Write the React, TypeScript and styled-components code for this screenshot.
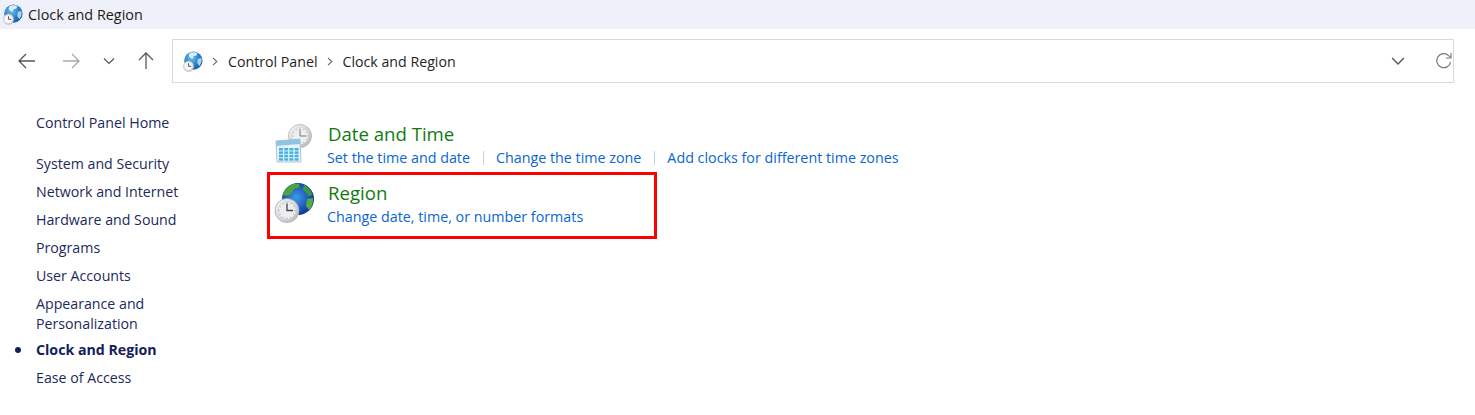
import React from 'react';
import styled, { createGlobalStyle } from 'styled-components';

const Global = createGlobalStyle`
  html, body { margin: 0; padding: 0; background: #fff; }
  body { font-family: "Open Sans", "Noto Sans", "Liberation Sans", sans-serif; overflow: hidden; }
`;

const Window = styled.div`
  width: 1475px;
  height: 415px;
  overflow: hidden;
  display: flex;
  flex-direction: column;
  background: #fff;
`;

const TitleBar = styled.div`
  height: 29px;
  flex: none;
  display: flex;
  align-items: center;
  gap: 5px;
  padding-left: 2px;
  background: #eef1f9;
  color: #1a1a1a;
  font-size: 14.4px;
`;

const NavRow = styled.div`
  height: 44px;
  flex: none;
  margin-top: 10px;
  display: flex;
  align-items: center;
  padding: 0 21px 0 0;
`;

const NavButtons = styled.div`
  width: 172px;
  flex: none;
  display: flex;
  align-items: center;
  padding-left: 17px;
  box-sizing: border-box;
`;

const NavButton = styled.div<{ $w: number }>`
  width: ${(p) => p.$w}px;
  display: flex;
  align-items: center;
  justify-content: flex-start;
  flex: none;
`;

const AddressBar = styled.div`
  flex: 1;
  height: 44px;
  box-sizing: border-box;
  border: 1px solid #d9d9d9;
  display: flex;
  align-items: center;
  padding: 0 0 0 9px;
  font-size: 14.2px;
  color: #1f1f1f;
`;

const Crumb = styled.span`
  white-space: nowrap;
`;

const Sep = styled.span`
  display: flex;
  align-items: center;
  margin: 0 10px 0 9px;
`;

const AddressEnd = styled.div`
  margin-left: auto;
  display: flex;
  align-items: center;
  gap: 30px;
`;

const Body = styled.div`
  flex: 1;
  display: flex;
`;

const Sidebar = styled.nav`
  width: 267px;
  flex: none;
  box-sizing: border-box;
  padding: 29px 0 0 36px;
  font-size: 14.2px;
  color: #1b2a5c;
`;

const SideHome = styled.div`
  line-height: 22px;
  margin-bottom: 16px;
`;

const SideItem = styled.div<{ $active?: boolean; $tight?: boolean }>`
  position: relative;
  line-height: 20px;
  padding: 4px 0 ${(p) => (p.$tight ? '2px' : '4px')};
  width: 160px;
  font-weight: ${(p) => (p.$active ? 700 : 400)};
  color: ${(p) => (p.$active ? '#14205a' : '#1b2a5c')};

  ${(p) =>
    p.$active &&
    `&::before {
      content: '';
      position: absolute;
      left: -21px;
      top: 11px;
      width: 6px;
      height: 6px;
      border-radius: 50%;
      background: #14205a;
    }`}
`;

const Main = styled.main`
  flex: 1;
  padding-top: 34px;
  display: flex;
  flex-direction: column;
`;

const Category = styled.section<{ $outlined?: boolean }>`
  display: flex;
  box-sizing: border-box;
  width: ${(p) => (p.$outlined ? '390px' : 'auto')};
  height: ${(p) => (p.$outlined ? '67px' : '52px')};
  border: 3px solid ${(p) => (p.$outlined ? '#ff0000' : 'transparent')};
  padding-left: 4px;
  margin-top: ${(p) => (p.$outlined ? '3px' : '0')};
  align-items: flex-start;
  padding-top: ${(p) => (p.$outlined ? '4px' : '0')};
`;

const CatIcon = styled.div`
  width: 53px;
  height: 48px;
  flex: none;
  display: flex;
  align-items: center;
`;

const CatText = styled.div`
  display: flex;
  flex-direction: column;
`;

const CatTitle = styled.div`
  font-size: 18.6px;
  line-height: 27px;
  color: #0f7b0f;
  margin-left: 1px;
`;

const Links = styled.div`
  display: flex;
  align-items: center;
  font-size: 14.3px;
  line-height: 21px;
  color: #0a66d0;
`;

const TaskLink = styled.span<{ $divided?: boolean }>`
  white-space: nowrap;
  ${(p) =>
    p.$divided &&
    `margin-left: 13px;
     padding-left: 12px;
     border-left: 1px solid #c9d3e0;
     line-height: 14px;`}
`;

const Arrow = ({ flip, color }: { flip?: boolean; color: string }) => (
  <svg width="20" height="20" viewBox="0 0 20 20" fill="none" stroke={color} strokeWidth="1.3">
    <path d={flip ? 'M2 10H18M11 3l7 7-7 7' : 'M18 10H2M9 3l-7 7 7 7'} />
  </svg>
);

const Up = () => (
  <svg width="20" height="20" viewBox="0 0 20 20" fill="none" stroke="#5a5a5a" strokeWidth="1.3">
    <path d="M10 18V2M3 9l7-7 7 7" />
  </svg>
);

const Chevron = ({ size = 12 }: { size?: number }) => (
  <svg width={size} height={size} viewBox="0 0 12 12" fill="none" stroke="#555" strokeWidth="1.2">
    <path d="M1 3.5l5 5 5-5" />
  </svg>
);

const SepChevron = () => (
  <svg width="6" height="9" viewBox="0 0 6 9" fill="none" stroke="#666" strokeWidth="1.1">
    <path d="M1 .8l3.8 3.700L1 8.200" />
  </svg>
);

const Refresh = () => (
  <svg width="18" height="18" viewBox="0 0 18 18" fill="none" stroke="#7a7a7a" strokeWidth="1.2">
    <path d="M15.600 10.200a7 7 0 1 1-2-6.600L15.800 5.600" />
    <path d="M16 1v5h-5" />
  </svg>
);

const Ticks = ({ cx, cy, r }: { cx: number; cy: number; r: number }) => (
  <g stroke="#9a9ea3" strokeWidth=".7">
    {Array.from({ length: 12 }).map((_, i) => {
      const a = (i * Math.PI) / 6;
      return (
        <line
          key={i}
          x1={cx + Math.cos(a) * r}
          y1={cy + Math.sin(a) * r}
          x2={cx + Math.cos(a) * (r - 1.5)}
          y2={cy + Math.sin(a) * (r - 1.5)}
        />
      );
    })}
  </g>
);

// small globe with a clock, used by the title bar and the address bar
const GlobeClock = ({ size, id }: { size: number; id: string }) => (
  <svg width={size} height={size} viewBox="0 0 48 48">
    <defs>
      <radialGradient id={`sea-${id}`} cx="0.4" cy="0.35" r="0.75">
        <stop offset="0" stopColor="#6fc3ee" />
        <stop offset="0.6" stopColor="#2678c4" />
        <stop offset="1" stopColor="#154f97" />
      </radialGradient>
      <linearGradient id={`face-${id}`} x1="0" y1="0" x2="1" y2="1">
        <stop offset="0" stopColor="#f6f6f6" />
        <stop offset="1" stopColor="#c5c5c5" />
      </linearGradient>
    </defs>
    <circle cx="26" cy="22" r="21" fill={`url(#sea-${id})`} />
    <path d="M18 4c5-2 13-2 17 1l-2 5-7 2-1 5-6-1-4-5z" fill="#d7edf9" />
    <path d="M36 18l8-2c2 6 0 13-4 18l-5-6z" fill="#a9d6ee" />
    <circle cx="15" cy="35" r="12" fill={`url(#face-${id})`} stroke="#a8a8a8" strokeWidth="1" />
    <circle cx="15" cy="35" r="8.500" fill="#f7f7f7" />
    <path d="M15 28v7h6" fill="none" stroke="#444" strokeWidth="2" />
  </svg>
);

const RegionGlyph = () => (
  <svg width="41" height="42" viewBox="0 0 41 42">
    <defs>
      <radialGradient id="ocean" cx="0.45" cy="0.45" r="0.6">
        <stop offset="0" stopColor="#3f9be8" />
        <stop offset="0.7" stopColor="#1650b5" />
        <stop offset="1" stopColor="#0d2f80" />
      </radialGradient>
      <linearGradient id="rim" x1="0" y1="0" x2="1" y2="1">
        <stop offset="0" stopColor="#fafafa" />
        <stop offset="1" stopColor="#b4b8bc" />
      </linearGradient>
    </defs>
    <circle cx="24" cy="17" r="16" fill="url(#ocean)" />
    <path d="M12 7c3-4 8-6 13-5l1 3-6 2-3 5-5 2-3-1c0-2 1-4 3-6z" fill="#4fa33d" />
    <path d="M30 3c4 2 7 5 8.500 10l-4 1-3-4-3-3z" fill="#3f9a3a" />
    <path d="M33 17l6-1c.4 5-1 9-4 12l-3-4z" fill="#58ab3f" />
    <circle cx="13" cy="28.500" r="12" fill="url(#rim)" stroke="#a4a8ac" strokeWidth=".8" />
    <circle cx="13" cy="28.500" r="9" fill="#eceef0" stroke="#c8cacc" strokeWidth=".6" />
    <Ticks cx={13} cy={28.5} r={8.5} />
    <path d="M13 21.500v7h6" fill="none" stroke="#444" strokeWidth="1.300" />
  </svg>
);

const DateGlyph = () => (
  <svg width="40" height="40" viewBox="0 0 40 40">
    <defs>
      <linearGradient id="clockRim" x1="0" y1="0" x2="1" y2="1">
        <stop offset="0" stopColor="#fafafa" />
        <stop offset="1" stopColor="#b0b4b8" />
      </linearGradient>
    </defs>
    <circle cx="26" cy="12" r="11.500" fill="url(#clockRim)" stroke="#aeb2b6" strokeWidth=".8" />
    <circle cx="26" cy="12" r="8.500" fill="#eef0f2" stroke="#cfd1d3" strokeWidth=".6" />
    <Ticks cx={26} cy={12} r={8} />
    <path d="M26 5.500V12h6" fill="none" stroke="#777" strokeWidth="1" />
    <path d="M2 17l24-2 1 23H3z" fill="#e8f4fb" stroke="#9fb9c9" strokeWidth=".8" />
    <path d="M2 17l24-2v5L2 22z" fill="#8fc4e2" />
    <g fill="#45b2e3">
      {[0, 1, 2, 3].map((r) =>
        [0, 1, 2, 3].map((c) => (
          <rect key={`${r}-${c}`} x={5 + c * 5.2} y={24 + r * 3.4} width="4" height="2.500" />
        )),
      )}
    </g>
  </svg>
);

const sideItems = ['System and Security', 'Network and Internet', 'Hardware and Sound', 'Programs', 'User Accounts'];

export default function App() {
  return (
    <Window>
      <Global />
      <TitleBar>
        <GlobeClock size={21} id="title" />
        <span>Clock and Region</span>
      </TitleBar>
      <NavRow>
        <NavButtons>
          <NavButton $w={44}><Arrow color="#555" /></NavButton>
          <NavButton $w={42}><Arrow flip color="#a8a8a8" /></NavButton>
          <NavButton $w={33}><Chevron /></NavButton>
          <NavButton $w={20}><Up /></NavButton>
        </NavButtons>
        <AddressBar>
          <GlobeClock size={21} id="addr" />
          <Sep><SepChevron /></Sep>
          <Crumb>Control Panel</Crumb>
          <Sep><SepChevron /></Sep>
          <Crumb>Clock and Region</Crumb>
          <AddressEnd>
            <Chevron size={14} />
            <Refresh />
          </AddressEnd>
        </AddressBar>
      </NavRow>
      <Body>
        <Sidebar>
          <SideHome>Control Panel Home</SideHome>
          {sideItems.map((s) => (
            <SideItem key={s}>{s}</SideItem>
          ))}
          <SideItem $tight>
            Appearance and
            <br />
            Personalization
          </SideItem>
          <SideItem $active>Clock and Region</SideItem>
          <SideItem>Ease of Access</SideItem>
        </Sidebar>
        <Main>
          <Category>
            <CatIcon><DateGlyph /></CatIcon>
            <CatText>
              <CatTitle>Date and Time</CatTitle>
              <Links>
                <TaskLink>Set the time and date</TaskLink>
                <TaskLink $divided>Change the time zone</TaskLink>
                <TaskLink $divided>Add clocks for different time zones</TaskLink>
              </Links>
            </CatText>
          </Category>
          <Category $outlined>
            <CatIcon><RegionGlyph /></CatIcon>
            <CatText>
              <CatTitle>Region</CatTitle>
              <Links>
                <TaskLink>Change date, time, or number formats</TaskLink>
              </Links>
            </CatText>
          </Category>
        </Main>
      </Body>
    </Window>
  );
}
